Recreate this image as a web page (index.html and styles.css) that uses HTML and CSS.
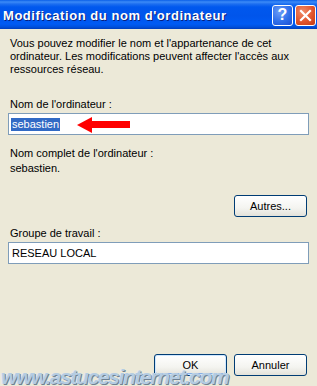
FILE: index.html
```html
<!DOCTYPE html>
<html lang="fr">
<head>
<meta charset="utf-8">
<title>Modification du nom d'ordinateur</title>
<link rel="stylesheet" href="styles.css">
</head>
<body>
<div class="window">
  <div class="titlebar">
    <span class="title">Modification du nom d'ordinateur</span>
    <div class="tb-buttons">
      <span class="tb-btn help">?</span>
      <span class="tb-btn close">
        <svg width="13" height="13" viewBox="0 0 13 13"><path d="M2 2 L11 11 M11 2 L2 11" stroke="#fff" stroke-width="2.2" stroke-linecap="square"/></svg>
      </span>
    </div>
  </div>
  <div class="content">
    <p class="intro">Vous pouvez modifier le nom et l'appartenance de cet ordinateur. Les modifications peuvent affecter l'accès aux ressources réseau.</p>
    <div class="label label-name">Nom de l'ordinateur :</div>
    <div class="field"><span class="selected">sebastien</span></div>
    <div class="label label-full">Nom complet de l'ordinateur :</div>
    <div class="value">sebastien.</div>
    <div class="row-right"><span class="btn btn-other">Autres...</span></div>
    <div class="label label-group">Groupe de travail :</div>
    <div class="field">RESEAU LOCAL</div>
    <div class="footer">
      <span class="btn btn-default">OK</span>
      <span class="btn">Annuler</span>
    </div>
  </div>
  <svg class="arrow" width="53" height="16" viewBox="0 0 53 16"><path d="M0 8 L15 0 L15 4 L53 4 L53 11 L15 11 L15 16 Z" fill="#f00"/></svg>
  <div class="watermark">www.astucesinternet.com</div>
</div>
</body>
</html>
```

FILE: styles.css
```css
html, body {
  margin: 0;
  padding: 0;
}
body {
  width: 317px;
  height: 386px;
  overflow: hidden;
  background: #ECE9D8;
  font-family: Tahoma, "Liberation Sans", Arial, sans-serif;
  font-size: 11px;
  color: #000;
}
.window {
  position: relative;
  width: 317px;
  height: 386px;
}
.titlebar {
  height: 29px;
  display: flex;
  align-items: center;
  justify-content: space-between;
  background: linear-gradient(to bottom, #0A5FE8 0px, #3C8BF7 2px, #1C6EF0 4px, #0058EE 7px, #0055EB 16px, #005BF4 24px, #0050DC 27px, #003DBA 29px);
}
.title {
  padding-left: 3px;
  color: #fff;
  font-family: "Liberation Sans", Arial, sans-serif;
  font-weight: bold;
  font-size: 13px;
  letter-spacing: 0.55px;
  text-shadow: 1px 1px 0 #0A1E7A;
  margin-top: 1px;
}
.tb-buttons {
  display: flex;
  gap: 2px;
  padding-right: 1px;
  margin-top: 1px;
}
.tb-btn {
  width: 19px;
  height: 19px;
  border: 1px solid #fff;
  border-radius: 3px;
  display: flex;
  align-items: center;
  justify-content: center;
  box-sizing: content-box;
}
.help {
  background: radial-gradient(circle at 35% 30%, #6D9DF7 0%, #2F6FEA 55%, #1D4FD2 100%);
  color: #fff;
  font-family: "Liberation Sans", Arial, sans-serif;
  font-weight: bold;
  font-size: 16px;
}
.close {
  background: radial-gradient(circle at 35% 30%, #F08C6A 0%, #E1552D 55%, #C23A14 100%);
}
.content {
  padding: 8px 8px 0 10px;
}
.intro {
  margin: 0;
  line-height: 13px;
  width: 288px;
}
.label {
  line-height: 13px;
}
.label-name {
  margin-top: 22px;
}
.field {
  margin-top: 2px;
  margin-left: -2px;
  height: 20px;
  border: 1px solid #7F9DB9;
  background: #fff;
  padding-left: 3px;
  line-height: 20px;
}
.selected {
  background: #316AC5;
  color: #fff;
  display: inline-block;
  line-height: 13px;
  padding: 0 1px 0 1px;
  margin-left: -1px;
}
.label-full {
  margin-top: 12px;
}
.value {
  margin-top: 2px;
  line-height: 13px;
}
.row-right {
  display: flex;
  justify-content: flex-end;
  margin-top: 20px;
  padding-right: 2px;
}
.btn {
  width: 71px;
  height: 20px;
  border: 1px solid #003C74;
  border-radius: 3px;
  background: linear-gradient(to bottom, #FFFFFF 0%, #F4F4F0 60%, #E3E2DA 100%);
  display: flex;
  align-items: center;
  justify-content: center;
  box-sizing: content-box;
}
.btn-default {
  box-shadow: inset 0 0 0 1px #CEE7FF, inset 0 -1px 0 1px #89ADE4;
}
.label-group {
  margin-top: 10px;
}
.footer {
  display: flex;
  justify-content: flex-end;
  gap: 7px;
  margin-top: 90px;
  padding-right: 2px;
}
.arrow {
  position: absolute;
  left: 77px;
  top: 117px;
}
.watermark {
  position: absolute;
  left: 1px;
  top: 365px;
  font-family: "Liberation Sans", Arial, sans-serif;
  font-weight: bold;
  font-style: italic;
  font-size: 21px;
  letter-spacing: -1.35px;
  color: #B4CCE2;
  text-shadow: 1px 1px 0 #6F8193, -1px 0 0 #DCE6EE;
  white-space: nowrap;
}
```
